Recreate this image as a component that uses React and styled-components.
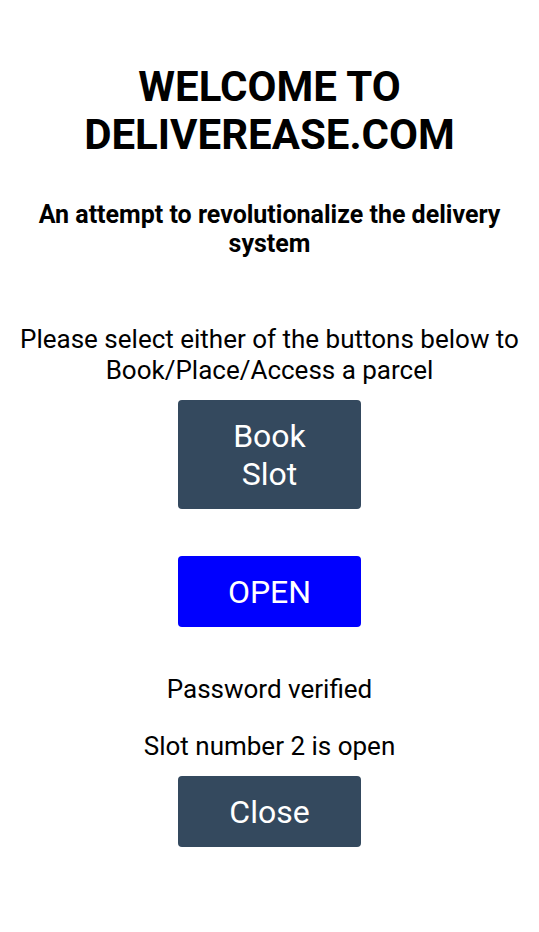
import React from 'react';
import styled, { createGlobalStyle } from 'styled-components';

const GlobalStyle = createGlobalStyle`
  * { box-sizing: border-box; }
  body {
    margin: 0;
    background: #ffffff;
    font-family: Roboto, "Noto Sans", Arial, sans-serif;
    color: #000000;
  }
`;

const Page = styled.div`
  display: flex;
  flex-direction: column;
  align-items: center;
  text-align: center;
  padding-top: 63px;
  padding-bottom: 40px;
`;

const Title = styled.h1`
  margin: 0;
  font-size: 42px;
  line-height: 48px;
  font-weight: 700;
`;

const Tagline = styled.h3`
  margin: 41px 0 0;
  font-size: 25px;
  line-height: 29px;
  font-weight: 700;
  padding: 0 20px;
`;

const Text = styled.p`
  margin: ${(p) => p.$top || 0}px 0 0;
  font-size: 26px;
  line-height: ${(p) => p.$lh || 30}px;
  padding: 0 8px;
`;

const Button = styled.button`
  width: 183px;
  margin-top: ${(p) => p.$top || 0}px;
  padding: 16.5px 26px;
  border: none;
  border-radius: 4px;
  background: ${(p) => p.$bg || '#34495e'};
  color: #ffffff;
  font-family: inherit;
  font-size: 32px;
  line-height: 38px;
  cursor: pointer;
`;

export default function App() {
  return (
    <>
      <GlobalStyle />
      <Page>
        <Title>
          WELCOME TO
          <br />
          DELIVEREASE.COM
        </Title>
        <Tagline>An attempt to revolutionalize the delivery system</Tagline>
        <Text $top={66} $lh={31}>
          Please select either of the buttons below to Book/Place/Access a parcel
        </Text>
        <Button $top={14}>Book Slot</Button>
        <Button $top={47} $bg="#0000ff">OPEN</Button>
        <Text $top={47}>Password verified</Text>
        <Text $top={27}>Slot number 2 is open</Text>
        <Button $top={15}>Close</Button>
      </Page>
    </>
  );
}
